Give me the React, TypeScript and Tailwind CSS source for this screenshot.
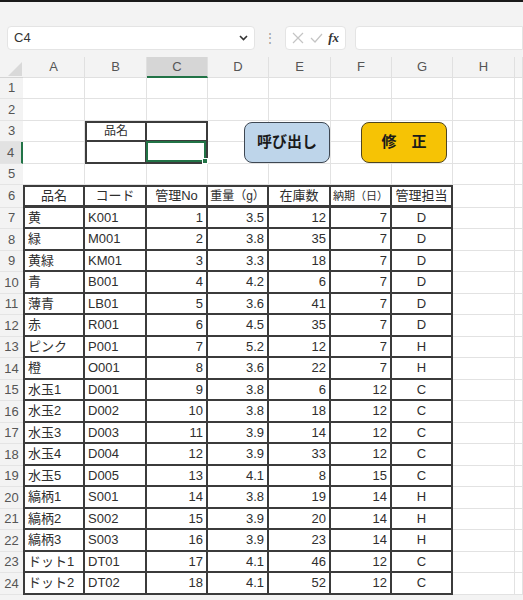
import React from 'react';

type Row = [string, string, number, string, number, number, string];

const data: Row[] = [
  ['黄', 'K001', 1, '3.5', 12, 7, 'D'],
  ['緑', 'M001', 2, '3.8', 35, 7, 'D'],
  ['黄緑', 'KM01', 3, '3.3', 18, 7, 'D'],
  ['青', 'B001', 4, '4.2', 6, 7, 'D'],
  ['薄青', 'LB01', 5, '3.6', 41, 7, 'D'],
  ['赤', 'R001', 6, '4.5', 35, 7, 'D'],
  ['ピンク', 'P001', 7, '5.2', 12, 7, 'H'],
  ['橙', 'O001', 8, '3.6', 22, 7, 'H'],
  ['水玉1', 'D001', 9, '3.8', 6, 12, 'C'],
  ['水玉2', 'D002', 10, '3.8', 18, 12, 'C'],
  ['水玉3', 'D003', 11, '3.9', 14, 12, 'C'],
  ['水玉4', 'D004', 12, '3.9', 33, 12, 'C'],
  ['水玉5', 'D005', 13, '4.1', 8, 15, 'C'],
  ['縞柄1', 'S001', 14, '3.8', 19, 14, 'H'],
  ['縞柄2', 'S002', 15, '3.9', 20, 14, 'H'],
  ['縞柄3', 'S003', 16, '3.9', 23, 14, 'H'],
  ['ドット1', 'DT01', 17, '4.1', 46, 12, 'C'],
  ['ドット2', 'DT02', 18, '4.1', 52, 12, 'C'],
];

const cols = ['A', 'B', 'C', 'D', 'E', 'F', 'G', 'H', ''];

const inTable = (r: number, c: number) => r >= 6 && r <= 24 && c <= 6;
const inBox = (r: number, c: number) => r >= 3 && r <= 4 && c >= 1 && c <= 2;

const cellContent = (r: number, c: number): React.ReactNode => {
  if (r === 3 && c === 1) return <span className="w-full text-center text-[12px]">品名</span>;
  // buttons sit over D3:E4 and F3:G4
  if (r === 3 && c === 3)
    return (
      <button className="absolute left-[36px] top-[1px] z-10 h-[41px] w-[86px] rounded-[8px] border border-[#3e4752] bg-[#bed5ea] text-[15px] font-bold text-[#1a1a1a]">
        呼び出し
      </button>
    );
  if (r === 3 && c === 5)
    return (
      <button className="absolute left-[30px] top-[1px] z-10 h-[41px] w-[86px] rounded-[8px] border border-[#4f4520] bg-[#f6c305] text-[15px] font-bold text-[#1a1a1a]">
        修　正
      </button>
    );
  if (r === 4 && c === 2)
    return (
      <div className="absolute -left-[1px] -top-[1px] bottom-0 right-0 z-10 border-2 border-[#217346]">
        <div className="absolute -bottom-[4px] -right-[4px] h-[6px] w-[6px] border border-white bg-[#217346]" />
      </div>
    );
  if (r === 6) {
    const heads = ['品名', 'コード', '管理No', '重量（g）', '在庫数', '納期（日）', '管理担当'];
    if (c > 6) return null;
    return (
      <span
        className={`w-full text-center ${
          c === 5 ? 'text-[11px]' : c === 3 ? 'text-[12px]' : 'text-[13px]'
        }`}
      >
        {heads[c]}
      </span>
    );
  }
  if (r >= 7 && r <= 24 && c <= 6) {
    const v = data[r - 7][c];
    if (c <= 1) return <span className="w-full pl-[3px] text-left">{v}</span>;
    if (c === 6) return <span className="w-full text-center">{v}</span>;
    return <span className="w-full pr-[3px] text-right">{v}</span>;
  }
  return null;
};

const Cell: React.FC<{ r: number; c: number }> = ({ r, c }) => {
  const dark = inTable(r, c) || inBox(r, c);
  const overlay = (r === 3 && (c === 3 || c === 5)) || (r === 4 && c === 2);
  const cls = dark
    ? `border-[#3b3b3b] border-r-2 ${r === 6 ? 'border-b-[3px]' : 'border-b-2'} ${
        c === 0 || (inBox(r, c) && c === 1) ? 'border-l-2' : ''
      } ${r === 6 || (inBox(r, c) && r === 3) ? 'border-t-2' : ''}`
    : 'border-r border-b border-[#e2e2e2]';
  return (
    <div
      className={`relative flex items-center whitespace-nowrap bg-white text-[13px] text-[#2e2e2e] ${
        overlay ? 'overflow-visible' : 'overflow-hidden'
      } ${cls}`}
    >
      {cellContent(r, c)}
    </div>
  );
};

const App: React.FC = () => {
  const rows = Array.from({ length: 24 }, (_, i) => i + 1);
  return (
    <div
      className="h-[600px] w-[523px] overflow-hidden bg-[#f3f3f3]"
      style={{ fontFamily: '"Liberation Sans", "Noto Sans CJK JP", sans-serif' }}
    >
      <div className="h-[2px] bg-[#1a1a1a]" />
      {/* formula bar */}
      <div className="flex items-center gap-[9px] pl-[7px] pt-[24px] pb-[7px]">
        <div className="flex h-[24px] w-[248px] items-center justify-between rounded-[4px] border border-[#e4e4e4] bg-white pl-[6px] pr-[6px] text-[13px] text-[#333]">
          <span>C4</span>
          <svg width="9" height="6" viewBox="0 0 9 6">
            <path d="M1 1l3.5 3.5L8 1" fill="none" stroke="#333" strokeWidth="1.6" />
          </svg>
        </div>
        <span className="text-[12px] leading-none text-[#999]">⋮</span>
        <div className="flex h-[24px] w-[61px] items-center justify-between rounded-[4px] border border-[#e4e4e4] bg-white px-[6px]">
          <svg width="12" height="12" viewBox="0 0 12 12">
            <path d="M1 1l10 10M11 1L1 11" stroke="#c4c4c4" strokeWidth="1.2" />
          </svg>
          <svg width="13" height="10" viewBox="0 0 13 10">
            <path d="M1 5l4 4 7-8" fill="none" stroke="#c4c4c4" strokeWidth="1.2" />
          </svg>
          <span
            className="text-[13px] font-bold italic text-[#333]"
            style={{ fontFamily: '"Liberation Serif", serif' }}
          >
            fx
          </span>
        </div>
        <div className="h-[24px] flex-1 rounded-l-[4px] border border-[#e4e4e4] bg-white" />
      </div>

      {/* sheet */}
      <div className="grid grid-cols-[23px_62px_62px_61px_61px_62px_61px_61px_62px_1fr] grid-rows-[21px_repeat(5,21.4px)_23px_repeat(18,21.5px)] bg-white">
        {/* column headers */}
        <div className="flex items-end justify-end border-b border-[#d4d4d4] bg-[#f3f3f3] pb-[1px] pr-[1px]">
          <svg width="14" height="14" viewBox="0 0 14 14">
            <path d="M14 0V14H0Z" fill="#d9d9d9" />
          </svg>
        </div>
        {cols.map((c) => (
          <div
            key={c || 'x'}
            className={`flex items-center justify-center border-r text-[13px] text-[#555] ${
              c === 'C'
                ? 'border-b-2 border-r-[#e0e0e0] border-b-[#217346] bg-[#d6d6d6]'
                : 'border-b border-[#e0e0e0] bg-[#f3f3f3]'
            }`}
          >
            {c}
          </div>
        ))}
        {rows.map((r) => (
          <React.Fragment key={r}>
            <div
              className={`flex items-center justify-center border-b border-[#e4e4e4] text-[13px] text-[#555] ${
                r === 4 ? 'border-r-2 border-r-[#217346] bg-[#e2e2e2]' : 'bg-[#f3f3f3]'
              }`}
            >
              {r}
            </div>
            {cols.map((_, c) => (
              <Cell key={c} r={r} c={c} />
            ))}
          </React.Fragment>
        ))}
      </div>
    </div>
  );
};

export default App;
